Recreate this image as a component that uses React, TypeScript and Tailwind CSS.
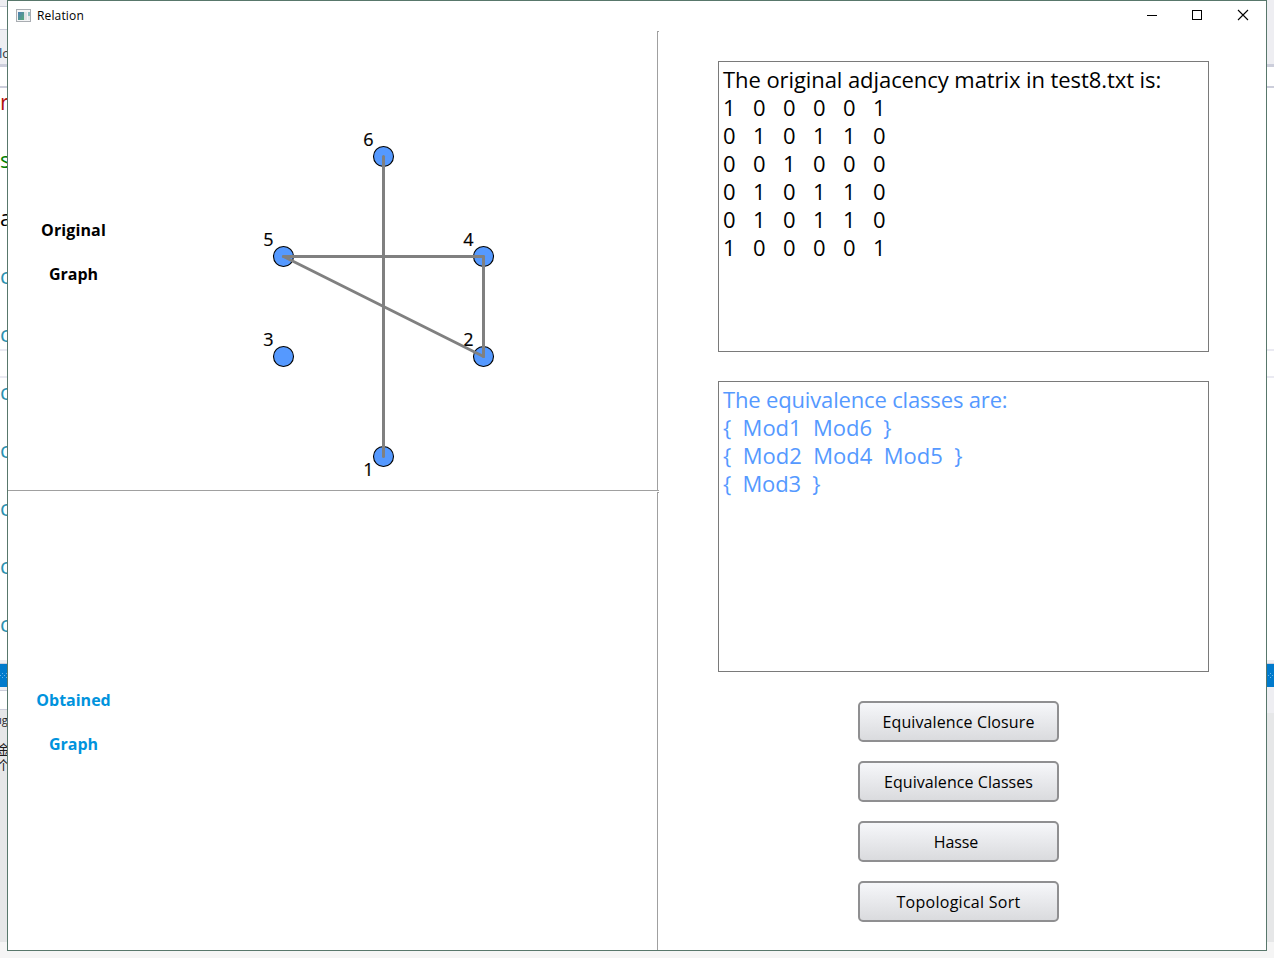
import type { ReactNode } from "react";

type Edge = [number, number];

const nodes = [
  { id: 6, x: 375, y: 125, ly: 114 },
  { id: 5, x: 275, y: 225, ly: 214 },
  { id: 4, x: 475, y: 225, ly: 214 },
  { id: 3, x: 275, y: 325, ly: 314 },
  { id: 2, x: 475, y: 325, ly: 314 },
  { id: 1, x: 375, y: 425, ly: 444 },
];

const edges: Edge[] = [[6, 1], [5, 4], [4, 2], [5, 2]];

const matrix = ["100001", "010110", "001000", "010110", "010110", "100001"];

const codeLetters = [
  { ch: "r", color: "text-[#b01010]" },
  { ch: "s", color: "text-[#008000]" },
  { ch: "a", color: "text-black" },
  { ch: "c", color: "text-[#2b91af]" },
  { ch: "c", color: "text-[#2b91af]" },
  { ch: "c", color: "text-[#2b91af]" },
  { ch: "c", color: "text-[#2b91af]" },
  { ch: "c", color: "text-[#2b91af]" },
  { ch: "c", color: "text-[#2b91af]" },
  { ch: "c", color: "text-[#2b91af]" },
];

function find(id: number) {
  return nodes.find((n) => n.id === id)!;
}

function Graph() {
  return (
    <svg width="649" height="459" className="absolute left-0 top-0">
      {nodes.map((n) => (
        <circle key={n.id} cx={n.x + 0.5} cy={n.y + 0.5} r="10" fill="#5599ff" stroke="#000" strokeWidth="1.1" />
      ))}
      {nodes.map((n) => (
        <text key={n.id} x={n.x - 14.6} y={n.ly + 0.5} textAnchor="middle" fontSize="18" fill="#000" stroke="#000" strokeWidth="0.2">
          {n.id}
        </text>
      ))}
      {edges.map(([a, b]) => (
        <line
          key={`${a}-${b}`}
          x1={find(a).x + 0.5}
          y1={find(a).y + 0.5}
          x2={find(b).x + 0.5}
          y2={find(b).y + 0.5}
          stroke="#808080"
          strokeWidth="3"
          strokeLinecap="round"
        />
      ))}
    </svg>
  );
}

function GraphLabel({ lines, className }: { lines: ReactNode[]; className: string }) {
  return (
    <div className={`w-[131px] text-center text-[16px] font-bold leading-[44px] ${className}`}>
      {lines.map((l, i) => (
        <div key={i}>{l}</div>
      ))}
    </div>
  );
}

function TextBox({ children, className }: { children: ReactNode; className: string }) {
  return (
    <div className={`h-[291px] w-[491px] shrink-0 whitespace-pre border border-[#7a7a7a] bg-white px-1 pt-[3px] text-[22px] leading-7 ${className}`}>
      {children}
    </div>
  );
}

function PushButton({ children, className }: { children: ReactNode; className: string }) {
  return (
    <button className={`h-[41px] w-[201px] shrink-0 rounded-[5px] border-2 border-[#8f8f91] bg-linear-to-b from-[#f6f7fa] to-[#dadbde] pt-px text-[16px] leading-none text-black ${className}`}>
      {children}
    </button>
  );
}

function LeftBackdrop() {
  return (
    <div className="relative flex h-[951px] w-[7px] shrink-0 flex-col overflow-hidden">
      <div className="h-[6px] shrink-0 bg-[#eeeef2]" />
      <div className="h-[23px] shrink-0 border-t border-[#ccceda] bg-white" />
      <div className="h-[35px] shrink-0 whitespace-nowrap border-t border-[#ccceda] bg-[#eeeef2] pt-[14px] text-[13px] font-medium leading-[18px]">
        <span className="-ml-px text-[#0e4583]">l</span>
        <span className="text-[#333]">o</span>
      </div>
      <div className="h-[3px] shrink-0 bg-[#cccedb]" />
      <div className="h-[19px] shrink-0 bg-white" />
      <div className="h-[2px] shrink-0 bg-[#cccedb]" />
      <div className="flex h-[572px] shrink-0 flex-col bg-white">
        {codeLetters.map((l, i) => (
          <div key={i} className="h-[58px] shrink-0 first:-mt-[2px]">
            <div className={`text-[22px] font-medium leading-[30px] ${l.color}`}>{l.ch}</div>
          </div>
        ))}
      </div>
      <div className="h-[3px] shrink-0 bg-[#eeeef2]" />
      <div className="h-[1px] shrink-0 bg-[#cccedb]" />
      <div className="h-[23px] shrink-0 bg-[#007acc]">
        <svg width="7" height="23" fill="#6cb4e6" shapeRendering="crispEdges">
          <rect x="2" y="9" width="1" height="1" />
          <rect x="6" y="9" width="1" height="1" />
          <rect x="0" y="11" width="1" height="1" />
          <rect x="4" y="11" width="1" height="1" />
          <rect x="2" y="13" width="1" height="1" />
          <rect x="6" y="13" width="1" height="1" />
        </svg>
      </div>
      <div className="h-[3px] shrink-0 bg-[#eeeef2]" />
      <div className="h-[20px] shrink-0 border-y border-[#cccedb] bg-white" />
      <div className="h-[232px] shrink-0 bg-[#e6e7e8] pt-[2px] text-[#1e1e1e]">
        <div className="-ml-px h-[30px] whitespace-nowrap text-[11px] leading-[16px]">ıg</div>
        <div className="-ml-[3px] h-[15px] w-[14px] text-[13px] leading-[14px]">金</div>
        <div className="-ml-[3px] h-[17px] w-[14px] text-[13px] leading-[17px]">个</div>
      </div>
      <div className="h-[9px] shrink-0 bg-[#f5f5f5]" />
      <div className="absolute left-0 top-[349px] h-[29px] w-[7px] border-y-2 border-[#eaeaf2]" />
    </div>
  );
}

function RightBackdrop() {
  return (
    <div className="flex h-[951px] w-[7px] shrink-0 flex-col overflow-hidden">
      <div className="h-[64px] shrink-0 bg-[#eeeef2]" />
      <div className="h-[3px] shrink-0 bg-[#cccedb]" />
      <div className="h-[19px] shrink-0 bg-white" />
      <div className="h-[2px] shrink-0 bg-[#cccedb]" />
      <div className="h-[261px] shrink-0 bg-white" />
      <div className="h-[29px] shrink-0 border-y-2 border-[#eaeaf2] bg-white" />
      <div className="h-[282px] shrink-0 bg-white" />
      <div className="h-[3px] shrink-0 bg-[#eeeef2]" />
      <div className="h-[1px] shrink-0 bg-[#cccedb]" />
      <div className="h-[23px] shrink-0 bg-[#007acc]">
        <svg width="7" height="23" fill="#6cb4e6" shapeRendering="crispEdges">
          <rect x="3" y="9" width="1" height="1" />
          <rect x="1" y="11" width="1" height="1" />
          <rect x="5" y="11" width="1" height="1" />
          <rect x="3" y="13" width="1" height="1" />
        </svg>
      </div>
      <div className="h-[26px] shrink-0 bg-[#eeeef2]" />
      <div className="grow bg-[#e6e7e8]" />
      <div className="h-[9px] shrink-0 bg-[#f5f5f5]" />
    </div>
  );
}

function AppIcon() {
  return (
    <svg width="16" height="14" className="shrink-0">
      <defs>
        <linearGradient id="pane" x1="0" y1="0" x2="1" y2="1">
          <stop offset="0" stopColor="#4f7fb5" />
          <stop offset="1" stopColor="#55a877" />
        </linearGradient>
      </defs>
      <rect x="0.5" y="0.5" width="14" height="12" fill="#f4f5f6" stroke="#a9adb2" />
      <rect x="2" y="3" width="6" height="8" fill="url(#pane)" />
      <rect x="8" y="3" width="3" height="8" fill="#dfe2e4" />
      <rect x="12" y="3" width="2" height="4" fill="#8fbfc0" />
      <rect x="12" y="7" width="2" height="4" fill="#e4e7e8" />
    </svg>
  );
}

function TitleBar() {
  return (
    <div className="flex h-[30px] shrink-0 items-center justify-between bg-white">
      <div className="flex items-center gap-[5px] pl-2 text-[12px] leading-none">
        <AppIcon />
        <span className="tracking-[0.15px]">Relation</span>
      </div>
      <svg width="138" height="30" fill="none" stroke="#000" strokeWidth="1">
        <path d="M19 14.5H29" />
        <rect x="64.5" y="9.5" width="9" height="9" />
        <path d="M110 9L120 19M120 9L110 19" strokeWidth="1.1" />
      </svg>
    </div>
  );
}

export default function App() {
  return (
    <div className="h-[958px] w-[1274px] overflow-hidden bg-[#f5f5f5] font-['Open_Sans','Noto_Sans_CJK_SC',sans-serif] text-black">
      <div className="flex">
        <LeftBackdrop />
        <div className="flex h-[951px] w-[1260px] shrink-0 flex-col border border-[#58776b] bg-white">
          <TitleBar />
          <div className="flex h-[919px]">
            <div className="w-[649px] shrink-0">
              <div className="relative h-[459px] pt-[177px]">
                <Graph />
                <GraphLabel
                  className="text-black"
                  lines={[<span key="o" className="tracking-[0.12px]">Original</span>, "Graph"]}
                />
              </div>
              <div className="h-px w-[651px] bg-[#a0a0a0]" />
              <div className="h-[459px] pt-[187px]">
                <GraphLabel className="text-[#0093dd]" lines={["Obtained", "Graph"]} />
              </div>
            </div>
            <div className="flex w-[2px] shrink-0 flex-col">
              <div className="h-[460px] w-full border-l border-t border-[#a0a0a0]" />
              <div className="h-px w-full" />
              <div className="h-[458px] w-full border-l border-t border-[#a0a0a0]" />
            </div>
            <div className="flex flex-col gap-[29px] pl-[59px] pt-[30px]">
              <TextBox className="text-black">
                <div className="tracking-[-0.075px]">The original adjacency matrix in test8.txt is:</div>
                {matrix.map((row, i) => (
                  <div key={i} className="flex">
                    {row.split("").map((v, j) => (
                      <span key={j} className="w-[30px]">{v}</span>
                    ))}
                  </div>
                ))}
              </TextBox>
              <TextBox className="text-[#5599ff]">
                <div className="tracking-[-0.16px]">The equivalence classes are:</div>
                <div className="tracking-[-0.02px]">{"{  Mod1  Mod6  }"}</div>
                <div>{"{  Mod2  Mod4  Mod5  }"}</div>
                <div className="tracking-[-0.1px]">{"{  Mod3  }"}</div>
              </TextBox>
              <div className="flex flex-col gap-[19px] pl-[140px]">
                <PushButton className="tracking-[0.12px]">Equivalence Closure</PushButton>
                <PushButton className="tracking-[0.06px]">Equivalence Classes</PushButton>
                <PushButton className="pr-[11px] pl-[6px] tracking-[-0.1px]">Hasse</PushButton>
                <PushButton className="pr-[6px] pl-[6px] tracking-[0.27px]">Topological Sort</PushButton>
              </div>
            </div>
          </div>
        </div>
        <RightBackdrop />
      </div>
    </div>
  );
}
